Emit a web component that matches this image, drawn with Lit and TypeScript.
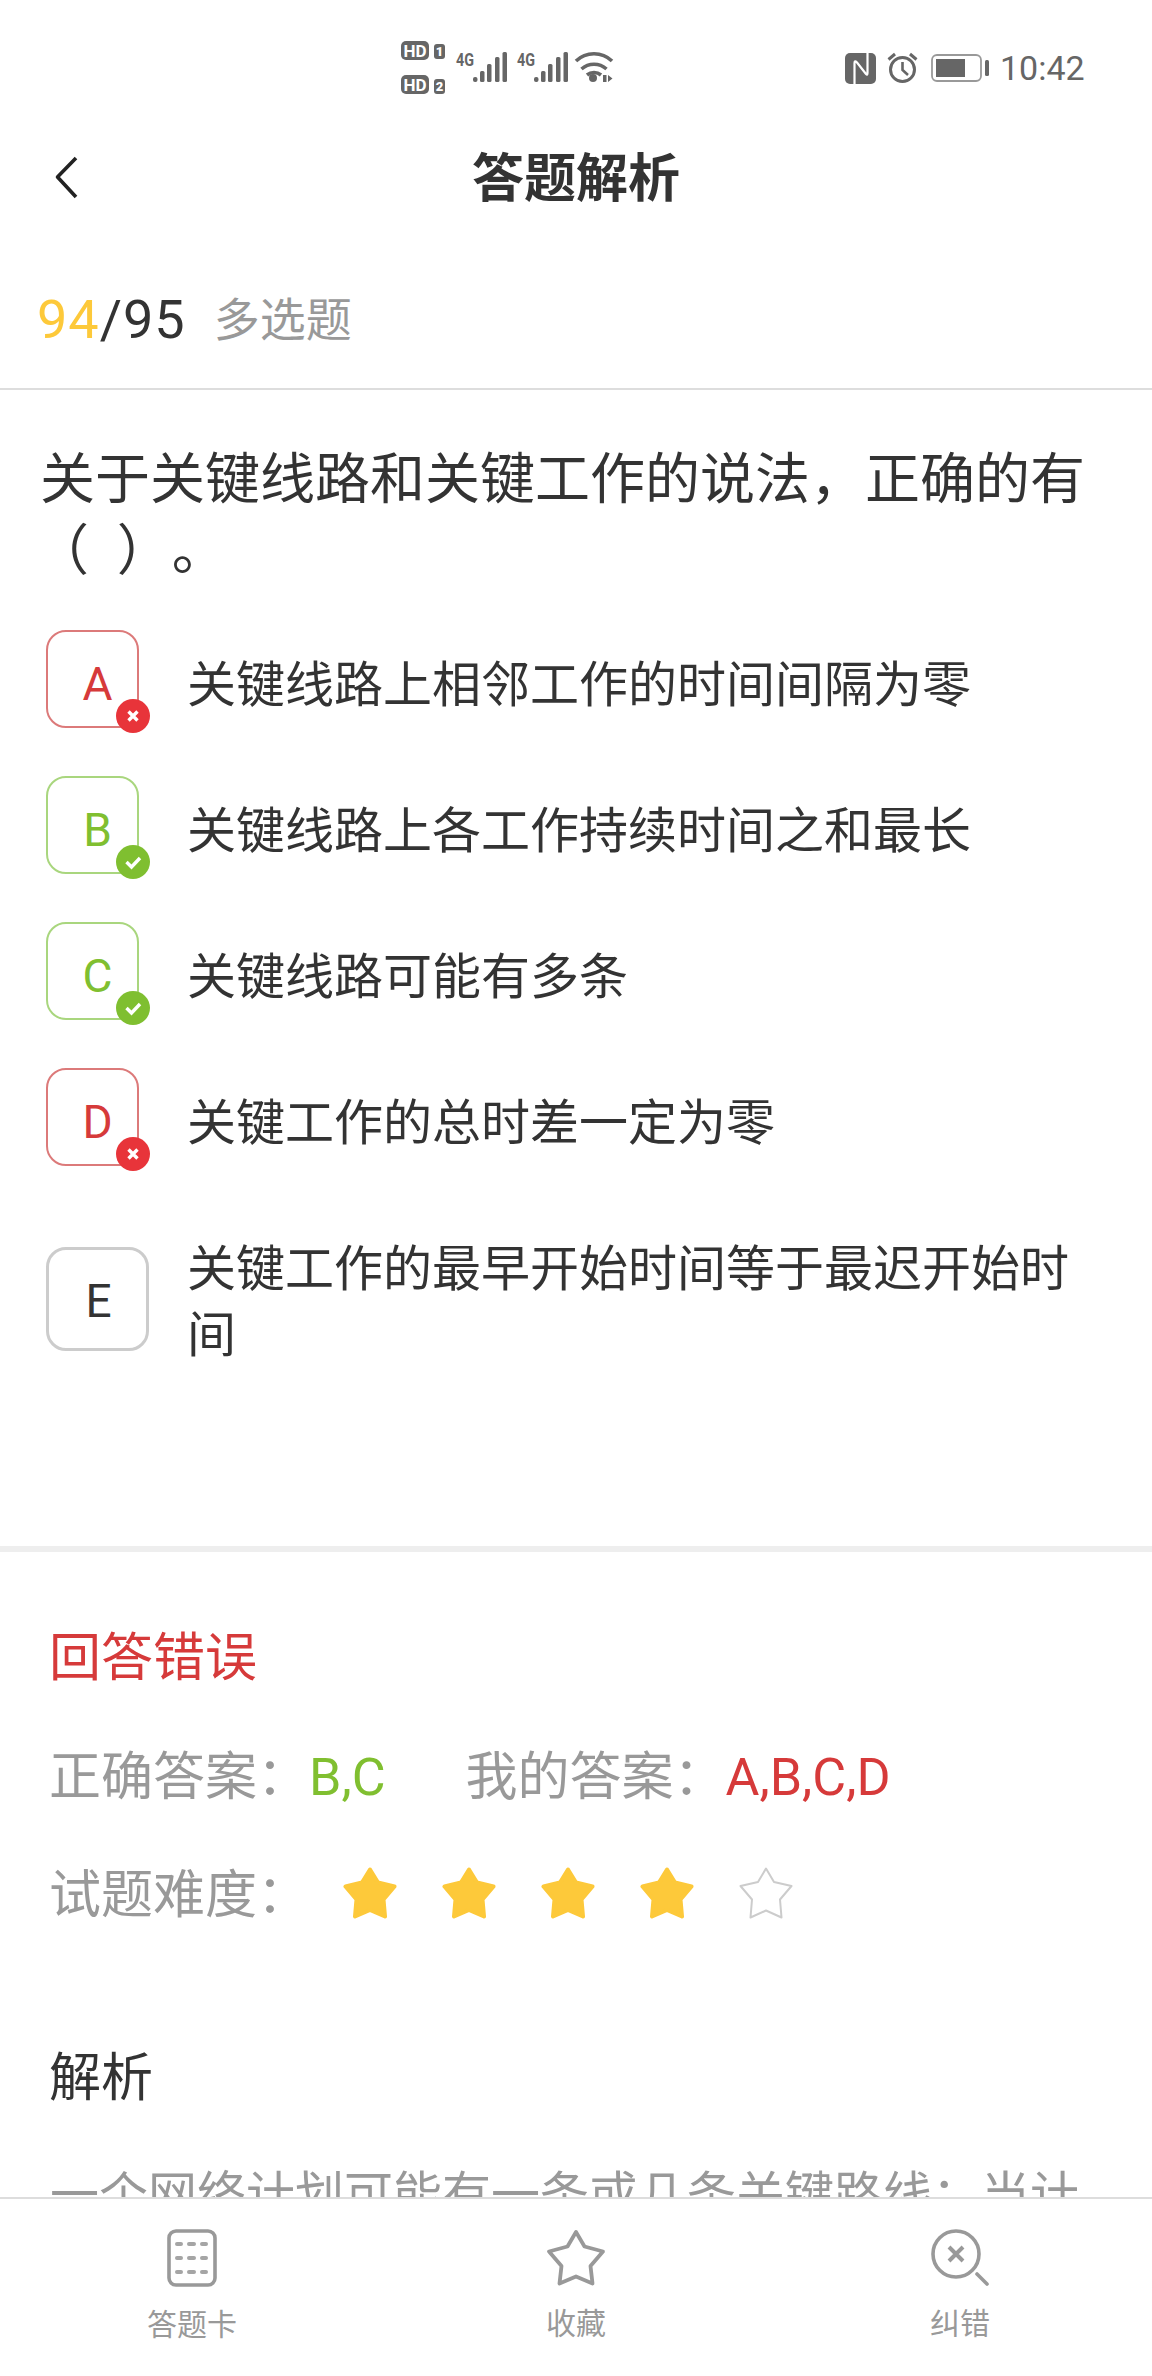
import { LitElement, html, css, svg } from "lit";
import { customElement } from "lit/decorators.js";

const starPts = "27,2.500 35,15.500 51.500,19.500 40.500,32.500 42,49.500 27,43 12,49.500 13.500,32.500 2.500,19.500 19,15.500";

const star = (on: boolean) => html`<svg class="star" width="54" height="52" viewBox="0 0 54 52">
  ${on
    ? svg`<polygon points=${starPts} fill="#fdc93a" stroke="#fdc93a" stroke-width="4" stroke-linejoin="round"/>`
    : svg`<polygon points="27,1.500 35,15 52.500,19 41,32.500 42.500,50.500 27,43.500 11.500,50.500 13,32.500 1.500,19 19,15" fill="none" stroke="#ccc" stroke-width="2" stroke-linejoin="round"/>`}
</svg>`;

const bars = (x: number) => svg`<g fill="#666">
  <rect x=${x} y="26" width="4.500" height="5" rx="2"/>
  <rect x=${x + 7} y="20" width="4.500" height="11" rx="1.500"/>
  <rect x=${x + 14} y="13" width="4.500" height="18" rx="1.500"/>
  <rect x=${x + 22} y="6" width="4.500" height="25" rx="1.500"/>
  <rect x=${x + 29.500} y="1" width="4.500" height="30" rx="1.500"/>
</g>`;

@customElement("app-root")
export class AppRoot extends LitElement {
  static styles = css`
    :host {
      display: block;
      width: 1152px;
      height: 2376px;
      background: #fff;
      font-family: Roboto, "Noto Sans CJK SC", sans-serif;
      color: #333;
      overflow: hidden;
    }
    .page { display: flex; flex-direction: column; height: 2376px; }
    .content { flex: 1; min-height: 0; overflow: hidden; }

    .status { height: 100px; display: flex; align-items: flex-start; padding-left: 400px; box-sizing: border-box; }
    .status-left { margin-top: 38px; display: block; }
    .status-right { display: flex; align-items: center; margin-left: 231px; margin-top: 51px; }
    .nfc { display: block; }
    .alarm { display: block; margin-left: 11px; }
    .battery { display: block; margin-left: 13px; }
    .time { font-size: 34px; line-height: 34px; color: #666; margin-left: 11px; margin-top: 0; }

    .nav { height: 154px; display: flex; align-items: center; justify-content: center; position: relative; }
    .back { position: absolute; left: 54px; top: 54px; display: block; }
    .title { font-size: 52px; font-weight: 700; color: #333; line-height: 60px; margin-top: 6px; }

    .progress {
      height: 136px;
      box-sizing: border-box;
      border-bottom: 2px solid #ddd;
      padding: 0 0 3px 37px;
      display: flex;
      align-items: center;
    }
    .num { font-size: 54px; line-height: 64px; letter-spacing: 1px; color: #333; }
    .cur { color: #fdc93a; }
    .kind { font-size: 46px; line-height: 64px; color: #999; margin-left: 28px; }

    .question { font-size: 55px; line-height: 71px; padding: 54px 30px 0 40px; color: #333; text-spacing-trim: space-all; word-spacing: 14px; }
    .open { margin-left: -6px; }

    .options { padding: 44px 44px 0 46px; display: flex; flex-direction: column; }
    .opt { display: flex; align-items: flex-start; margin-bottom: 48px; }
    .slot { width: 103px; flex: none; position: relative; }
    .box {
      width: 93px; height: 98px; box-sizing: border-box; border-radius: 20px;
      border: 2px solid #ccc; display: flex; align-items: center; justify-content: center;
      font-size: 46px; line-height: 50px; padding: 9px 0 0 10px;
    }
    .box.bad { border-color: #dc7a7a; color: #d63a3a; }
    .box.good { border-color: #a9d67e; color: #80bf30; }
    .box.plain { width: 103px; height: 104px; border: 3px solid #ccc; color: #333; padding: 4px 0 0 2px; }
    .badge { position: absolute; left: 70px; top: 68px; display: block; }
    .opt-text { margin-left: 38px; font-size: 49px; line-height: 66px; padding-top: 23px; color: #333; }
    .opt.last { margin-top: 33px; margin-bottom: 0; }
    .opt.last .opt-text { padding-top: 0; margin-top: -10px; }

    .band { height: 6px; background: #eee; margin-top: 177px; }

    .result { padding: 75px 0 0 49px; }
    .verdict { font-size: 52px; line-height: 64px; color: #d63a3a; }
    .row { display: flex; align-items: center; font-size: 52px; line-height: 64px; color: #999; margin-top: 55px; }
    .row.stars { margin-top: 54px; }
    .gv { color: #80bf30; }
    .rv { color: #d63a3a; }
    .mine { margin-left: 80px; }
    .star-list { display: flex; gap: 45px; margin: 0 0 7px 34px; }
    .star { display: block; }
    .head { font-size: 52px; line-height: 64px; color: #333; margin: 119px 0 0 49px; }
    .para { font-size: 49px; line-height: 70px; color: #999; margin: 50px 0 0 50px; white-space: nowrap; }

    .tabs {
      height: 179px; flex: none; box-sizing: border-box; border-top: 2px solid #ddd;
      background: #fff; display: grid; grid-template-columns: repeat(3, 1fr);
    }
    .tab { display: flex; flex-direction: column; align-items: center; padding-top: 30px; }
    .tab svg { display: block; }
    .tab span { font-size: 30px; line-height: 40px; color: #999; margin-top: 17px; }
    .tab:first-child span { margin-top: 18px; }
  `;

  private option(letter: string, text: string, kind: "bad" | "good" | "plain") {
    return html`<div class="opt ${kind === "plain" ? "last" : ""}">
      <div class="slot">
        <div class="box ${kind}">${letter}</div>
        ${kind === "bad"
          ? html`<svg class="badge" width="34" height="36" viewBox="0 0 34 36">
              <circle cx="17" cy="18" r="17" fill="#e8343a"/>
              <path d="M12.500 13.500l9 9M21.500 13.500l-9 9" stroke="#fff" stroke-width="3.400" fill="none"/>
            </svg>`
          : kind === "good"
          ? html`<svg class="badge" width="34" height="36" viewBox="0 0 34 36">
              <circle cx="17" cy="18" r="17" fill="#7fbf30"/>
              <path d="M10.500 18l5 5 8.500-9" stroke="#fff" stroke-width="3.400" fill="none"/>
            </svg>`
          : ""}
      </div>
      <div class="opt-text">${text}</div>
    </div>`;
  }

  render() {
    return html`<div class="page">
      <div class="content">
        <div class="status">
          <svg class="status-left" width="214" height="60" viewBox="0 0 214 60">
            <rect x="1" y="3" width="28" height="19" rx="5" fill="#666"/>
            <text x="15" y="18.500" font-size="17" font-weight="700" fill="#fff" text-anchor="middle" font-family="Roboto">HD</text>
            <rect x="34" y="6" width="11" height="15" rx="3" fill="#666"/>
            <text x="39.500" y="18" font-size="13" font-weight="900" fill="#fff" text-anchor="middle" font-family="Roboto">1</text>
            <rect x="1" y="37" width="28" height="19" rx="5" fill="#666"/>
            <text x="15" y="52.500" font-size="17" font-weight="700" fill="#fff" text-anchor="middle" font-family="Roboto">HD</text>
            <rect x="34" y="41" width="11" height="15" rx="3" fill="#666"/>
            <text x="39.500" y="53" font-size="13" font-weight="900" fill="#fff" text-anchor="middle" font-family="Roboto">2</text>
            <text x="56" y="28" font-size="19" font-weight="700" fill="#666" font-family="Roboto" textLength="18" lengthAdjust="spacingAndGlyphs">4G</text>
            <g transform="translate(0 13)">${bars(73)}</g>
            <text x="117" y="28" font-size="19" font-weight="700" fill="#666" font-family="Roboto" textLength="18" lengthAdjust="spacingAndGlyphs">4G</text>
            <g transform="translate(0 13)">${bars(134)}</g>
            <g fill="none" stroke="#666" stroke-width="3.600">
              <path d="M176 23a26 26 0 0 1 36 0"/>
              <path d="M181.500 31a19 19 0 0 1 25 0"/>
              <path d="M187 37a11 11 0 0 1 14 0"/>
            </g>
            <circle cx="193" cy="40" r="4" fill="#666"/>
            <path d="M203 37h3.500v7h-3.500zM208 37l4.500 3.500-4.500 3.500z" fill="#666"/>
          </svg>
          <div class="status-right">
            <svg class="nfc" width="31" height="31" viewBox="0 0 31 31">
              <rect width="31" height="31" rx="5" fill="#666"/>
              <path d="M9.500 31V10q0-3 2.500-.5L21 21q1.500 1.500 1.500-1V0" fill="none" stroke="#fff" stroke-width="2.200"/>
            </svg>
            <svg class="alarm" width="31" height="32" viewBox="0 0 31 32" fill="none" stroke="#666">
              <circle cx="15.500" cy="17.500" r="12" stroke-width="3"/>
              <path d="M15.500 10v8l5.500 5" stroke-width="2.600"/>
              <path d="M1.500 7.500L8 2M29.500 7.500L23 2" stroke-width="3"/>
            </svg>
            <svg class="battery" width="58" height="28" viewBox="0 0 58 28">
              <rect x="1" y="1" width="49" height="26" rx="5" fill="none" stroke="#999" stroke-width="1.800"/>
              <rect x="5" y="5" width="29" height="18" fill="#666"/>
              <rect x="54" y="6" width="4" height="16" rx="1.500" fill="#666"/>
            </svg>
            <div class="time">10:42</div>
          </div>
        </div>
        <div class="nav">
          <svg class="back" width="26" height="46" viewBox="0 0 26 46">
            <path d="M22 4L3.500 23 22 43" fill="none" stroke="#222" stroke-width="3.600" stroke-linejoin="round"/>
          </svg>
          <div class="title">答题解析</div>
        </div>
        <div class="progress">
          <div class="num"><span class="cur">94</span>/95</div>
          <div class="kind">多选题</div>
        </div>
        <div class="question">关于关键线路和关键工作的说法，正确的有<span class="open">（</span> ）。</div>
        <div class="options">
          ${this.option("A", "关键线路上相邻工作的时间间隔为零", "bad")}
          ${this.option("B", "关键线路上各工作持续时间之和最长", "good")}
          ${this.option("C", "关键线路可能有多条", "good")}
          ${this.option("D", "关键工作的总时差一定为零", "bad")}
          ${this.option("E", "关键工作的最早开始时间等于最迟开始时间", "plain")}
        </div>
        <div class="band"></div>
        <div class="result">
          <div class="verdict">回答错误</div>
          <div class="row">正确答案：<span class="gv">B,C</span><span class="mine">我的答案：</span><span class="rv">A,B,C,D</span></div>
          <div class="row stars">试题难度：<div class="star-list">${star(true)}${star(true)}${star(true)}${star(true)}${star(false)}</div></div>
        </div>
        <div class="head">解析</div>
        <div class="para">一个网络计划可能有一条或几条关键路线；当计</div>
      </div>
      <div class="tabs">
        <div class="tab">
          <svg width="50" height="58" viewBox="0 0 50 58">
            <rect x="2" y="2" width="46" height="54" rx="7" fill="none" stroke="#999" stroke-width="3.600"/>
            <g stroke="#a5a5a5" stroke-width="4" stroke-linecap="round">
              <path d="M10 15h4M22 15h5M35 15h4M10 29h4M22 29h5M35 29h4M10 43h4M22 43h5M35 43h4"/>
            </g>
          </svg>
          <span>答题卡</span>
        </div>
        <div class="tab">
          <svg width="60" height="58" viewBox="0 0 60 58">
            <polygon points="30,3 38.500,17.500 57,22.500 44.500,37 46.500,54.500 30,47.500 13.500,54.500 15.500,37 3,22.500 21.500,17.500" fill="none" stroke="#999" stroke-width="3.800" stroke-linejoin="round"/>
          </svg>
          <span>收藏</span>
        </div>
        <div class="tab">
          <svg width="58" height="58" viewBox="0 0 58 58" fill="none" stroke="#999">
            <circle cx="25" cy="25" r="23" stroke-width="3.600"/>
            <path d="M18 18l14 14M32 18L18 32" stroke-width="4"/>
            <path d="M46 45l10 10" stroke-width="3.600" stroke-linecap="round"/>
          </svg>
          <span>纠错</span>
        </div>
      </div>
    </div>`;
  }
}
